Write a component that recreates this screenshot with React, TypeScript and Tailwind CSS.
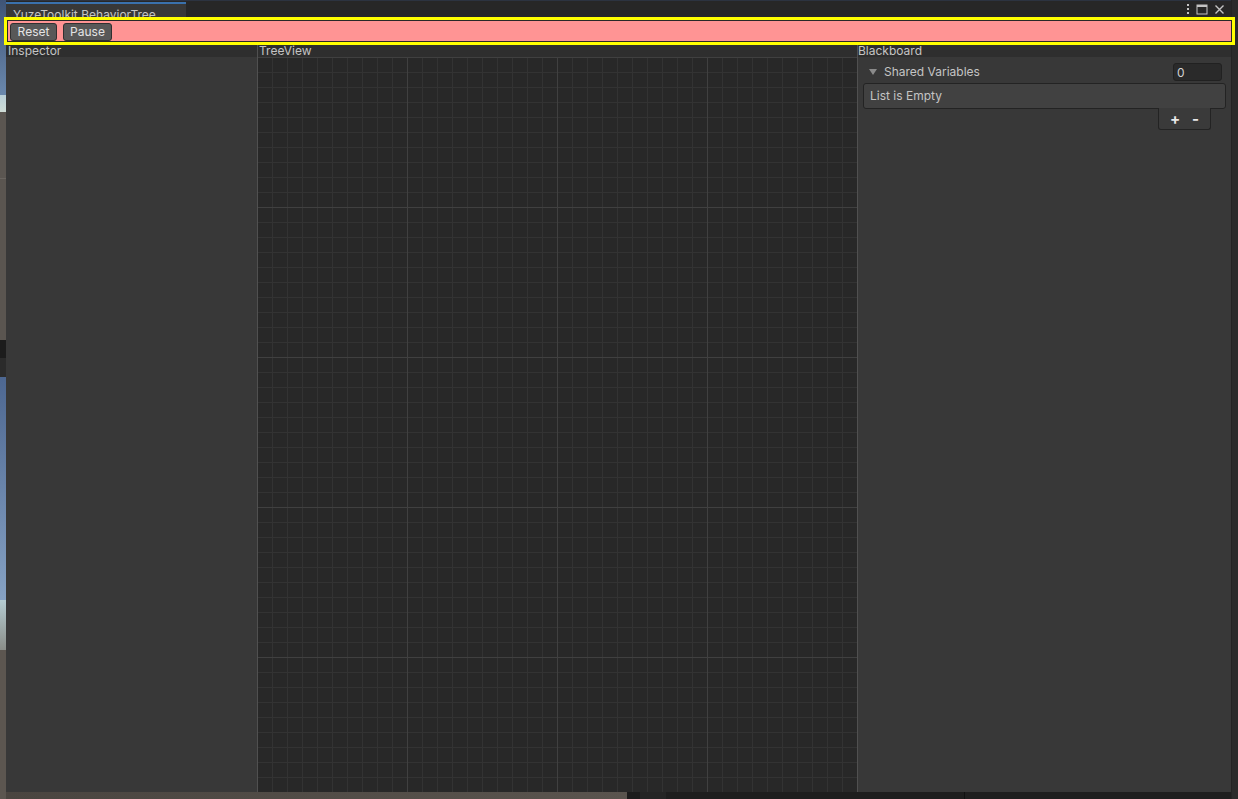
import React from "react";

const font = "font-['Inter','Noto_Sans','Liberation_Sans',sans-serif]";

function LeftStrip() {
  return (
    <div className="w-[6px] h-full flex flex-col shrink-0">
      <div className="h-[95px] bg-[linear-gradient(to_bottom,#3f5476,#6a88ad)]" />
      <div className="h-[17px] bg-[linear-gradient(to_bottom,#b9cfd8,#cfdcd6)]" />
      <div className="h-[66px] bg-[#5b5651]" />
      <div className="h-px bg-[#6a6560]" />
      <div className="h-[161px] bg-[#5a5550]" />
      <div className="h-[18px] bg-[#1c1c1c]" />
      <div className="h-[19px] bg-[#2b2b2b]" />
      <div className="h-[223px] bg-[linear-gradient(to_bottom,#4d6791,#86a2c4)]" />
      <div className="h-[50px] bg-[linear-gradient(to_bottom,#b5ccd2,#8a8d88)]" />
      <div className="flex-1 bg-[#5c5650]" />
    </div>
  );
}

function TitleIcons() {
  return (
    <div className="flex items-center gap-[6px] pr-[6px] text-[#c4c4c4]">
      <svg width="4" height="12" viewBox="0 0 4 12">
        <rect x="1" y="1" width="2" height="2" fill="currentColor" />
        <rect x="1" y="5" width="2" height="2" fill="currentColor" />
        <rect x="1" y="9" width="2" height="2" fill="currentColor" />
      </svg>
      <svg width="12" height="11" viewBox="0 0 12 11">
        <rect x="1" y="1" width="10" height="9" fill="none" stroke="currentColor" strokeWidth="1" />
        <rect x="1" y="1" width="10" height="2" fill="currentColor" />
      </svg>
      <svg width="11" height="11" viewBox="0 0 11 11">
        <path d="M1.5 1.5 L9.5 9.5 M9.5 1.5 L1.5 9.5" stroke="currentColor" strokeWidth="1.4" />
      </svg>
    </div>
  );
}

function ToolButton({ label, w }: { label: string; w: string }) {
  return (
    <button
      className={`${w} h-[18px] rounded-[3px] bg-[#585858] border border-[#303030] text-[12px] leading-[16px] text-[#e4e4e4]`}
    >
      {label}
    </button>
  );
}

function PanelHeader({ title, pad = "pl-[2px]" }: { title: string; pad?: string }) {
  return (
    <div className={`h-[12px] bg-[#2e2e2e] text-[#c4c4c4] text-[12px] leading-[11px] ${pad} whitespace-nowrap`}>
      {title}
    </div>
  );
}

function Blackboard() {
  return (
    <div className="w-[374px] flex flex-col border-l border-[#505050]">
      <PanelHeader title="Blackboard" pad="pl-0" />
      <div className="flex-1 bg-[#383838] px-[5px] pt-[6px] flex flex-col">
        <div className="h-[18px] flex items-center justify-between pr-[4px]">
          <div className="flex items-center">
            <svg width="10" height="8" viewBox="0 0 10 8" className="ml-[5px]">
              <path d="M1 1 L9 1 L5 7 Z" fill="#8a8a8a" />
            </svg>
            <span className="ml-[6px] text-[12px] text-[#c4c4c4]">Shared Variables</span>
          </div>
          <div className="w-[49px] h-[18px] rounded-[3px] bg-[#2a2a2a] border border-[#212121] text-[12px] leading-[18px] text-[#d2d2d2] pl-[3px]">
            0
          </div>
        </div>
        <div className="mt-[2px] h-[26px] rounded-[3px] bg-[#414141] border border-[#232323] flex items-center pl-[6px] text-[12px] text-[#c4c4c4]">
          List is Empty
        </div>
        <div className="self-end mr-[15px] -mt-px w-[53px] h-[22px] rounded-b-[3px] bg-[#3a3a3a] border border-t-0 border-[#232323] flex items-center justify-center gap-[12px] text-[#e8e8e8] font-bold">
          <span className="text-[15px] leading-[15px]">+</span>
          <span className="text-[15px] leading-[15px]">-</span>
        </div>
      </div>
    </div>
  );
}

export default function App() {
  return (
    <div className={`w-[1238px] h-[799px] flex overflow-hidden bg-[#2a2a2a] ${font}`}>
      <LeftStrip />

      <div className="w-[1225px] h-full flex flex-col shrink-0">
        <div className="h-[792px] flex flex-col bg-[#383838]">
          {/* tab bar */}
          <div className="h-[17px] flex justify-between bg-[#272727] border-t border-[#2c3340]">
            <div className="w-[180px] mt-px h-[15px] bg-[#383838] border-t-2 border-[#3a71ad] px-[7px] text-[12px] leading-[22px] text-[#c4c4c4] whitespace-nowrap">
              YuzeToolkit.BehaviorTree
            </div>
            <TitleIcons />
          </div>

          {/* toolbar (highlighted) */}
          <div className="relative z-10 -ml-[2px] -mr-[4px] h-[28px] border-[3px] border-[#ffff00] bg-[#282828] p-px">
            <div className="h-full bg-[#ff9494] flex items-center gap-[6px] pl-[2px] pt-[2px]">
              <ToolButton label="Reset" w="w-[47px]" />
              <ToolButton label="Pause" w="w-[49px]" />
            </div>
          </div>

          {/* panels */}
          <div className="flex-1 flex">
            <div className="w-[251px] flex flex-col">
              <PanelHeader title="Inspector" />
              <div className="flex-1 bg-[#383838]" />
            </div>

            <div className="w-[600px] flex flex-col border-l border-[#505050]">
              <PanelHeader title="TreeView" pad="pl-px" />
              <div className="flex-1 bg-[#282828] bg-[linear-gradient(to_right,#404040_1px,transparent_1px),linear-gradient(to_bottom,#404040_1px,transparent_1px),linear-gradient(to_right,#333333_1px,transparent_1px),linear-gradient(to_bottom,#333333_1px,transparent_1px)] bg-size-[150px_150px,150px_150px,15px_15px,15px_15px] bg-[position:-1px_0px]" />
            </div>

            <Blackboard />
          </div>
        </div>

        {/* below window */}
        <div className="flex-1 flex">
          <div className="w-[621px] bg-[linear-gradient(to_right,#4a4540,#5a544e)]" />
          <div className="w-[13px] bg-[#1c1c1c]" />
          <div className="w-[26px] bg-[#252525]" />
          <div className="w-[299px] bg-[#1e1e1e] border-r border-[#111111]" />
          <div className="flex-1 bg-[#1f1f1f]" />
        </div>
      </div>

      <div className="w-[7px] h-full bg-[#2b2b2b] border-l border-[#242424]" />
    </div>
  );
}
